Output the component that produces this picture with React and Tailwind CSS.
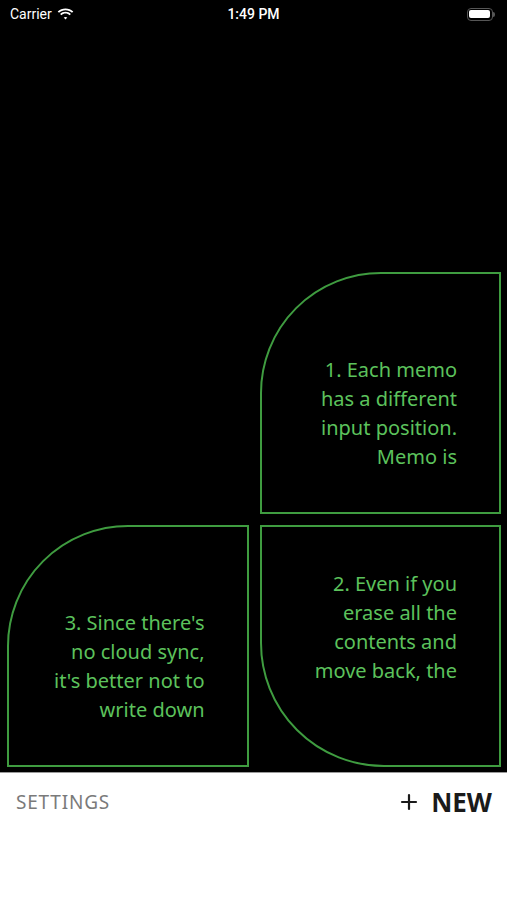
import { Plus } from "lucide-react";

const memos = [
  { id: "empty" },
  {
    id: 1,
    lines: ["1. Each memo", "has a different", "input position.", "Memo is"],
    shape: "rounded-tl-[121px]",
    pad: "pt-[81px]",
  },
  {
    id: 3,
    lines: ["3. Since there's", "no cloud sync,", "it's better not to", "write down"],
    shape: "rounded-tl-[121px]",
    pad: "pt-[81px]",
  },
  {
    id: 2,
    lines: ["2. Even if you", "erase all the", "contents and", "move back, the"],
    shape: "rounded-bl-[124px]",
    pad: "pt-[42px]",
  },
];

function StatusBar() {
  return (
    <div className="h-[28px] flex items-center justify-between px-[10px] text-white text-[14px] font-['Roboto',sans-serif]">
      <div className="flex items-center gap-[5px] w-[120px]">
        <span>Carrier</span>
        <svg width="17" height="12" viewBox="0 0 17 12" fill="white">
          <path d="M8.5 2.2c2.5 0 4.8 1 6.5 2.6l1.3-1.3C14.2 1.5 11.5.4 8.5.4S2.8 1.5.7 3.5L2 4.8c1.7-1.6 4-2.6 6.5-2.6z" />
          <path d="M8.5 5.6c1.6 0 3 .6 4.1 1.6l1.3-1.3C12.5 4.6 10.6 3.8 8.5 3.8S4.5 4.6 3.1 5.9l1.3 1.3c1.1-1 2.5-1.6 4.1-1.6z" />
          <path d="M8.5 8.9c.7 0 1.3.3 1.8.7L8.5 11.5 6.7 9.6c.5-.4 1.1-.7 1.8-.7z" />
        </svg>
      </div>
      <span className="font-medium">1:49 PM</span>
      <div className="w-[120px] flex justify-end pr-[2px]">
        <div className="flex items-center">
          <div className="w-[26px] h-[13px] rounded-[4px] border-[1.5px] border-[#555] p-[1.5px]">
            <div className="w-full h-full rounded-[2px] bg-white" />
          </div>
          <div className="w-[2px] h-[5px] rounded-r-sm bg-[#555]" />
        </div>
      </div>
    </div>
  );
}

function MemoCard({ memo }) {
  if (memo.id === "empty") return <div className="h-[242px]" />;
  return (
    <div
      className={`h-[242px] border-2 border-[#3f9c40] ${memo.shape} ${memo.pad} pr-[42px] flex flex-col items-end`}
    >
      {memo.lines.map((line) => (
        <p key={line} className="text-[20px] leading-[29px] text-[#5cc25c] text-right whitespace-nowrap">
          {line}
        </p>
      ))}
    </div>
  );
}

export default function App() {
  return (
    <div className="w-[507px] h-[900px] flex flex-col bg-white font-['Noto_Sans',sans-serif]">
      <div className="h-[773px] bg-black flex flex-col border-b border-[#9a9a9a]">
        <StatusBar />
        <div className="flex-1 flex flex-col justify-end pl-[7px] pr-[6px] pb-[5px]">
          <div className="grid grid-cols-2 gap-[11px]">
            {memos.map((memo) => (
              <MemoCard key={memo.id} memo={memo} />
            ))}
          </div>
        </div>
      </div>
      <div className="flex items-center justify-between pl-[16px] pr-[15px] h-[58px]">
        <span className="text-[19px] tracking-[0.8px] text-[#7a7a7a]">SETTINGS</span>
        <div className="flex items-center gap-[10px] text-[#1a1a1a]">
          <Plus size={24} strokeWidth={2.2} />
          <span className="text-[26px] font-bold">NEW</span>
        </div>
      </div>
    </div>
  );
}
